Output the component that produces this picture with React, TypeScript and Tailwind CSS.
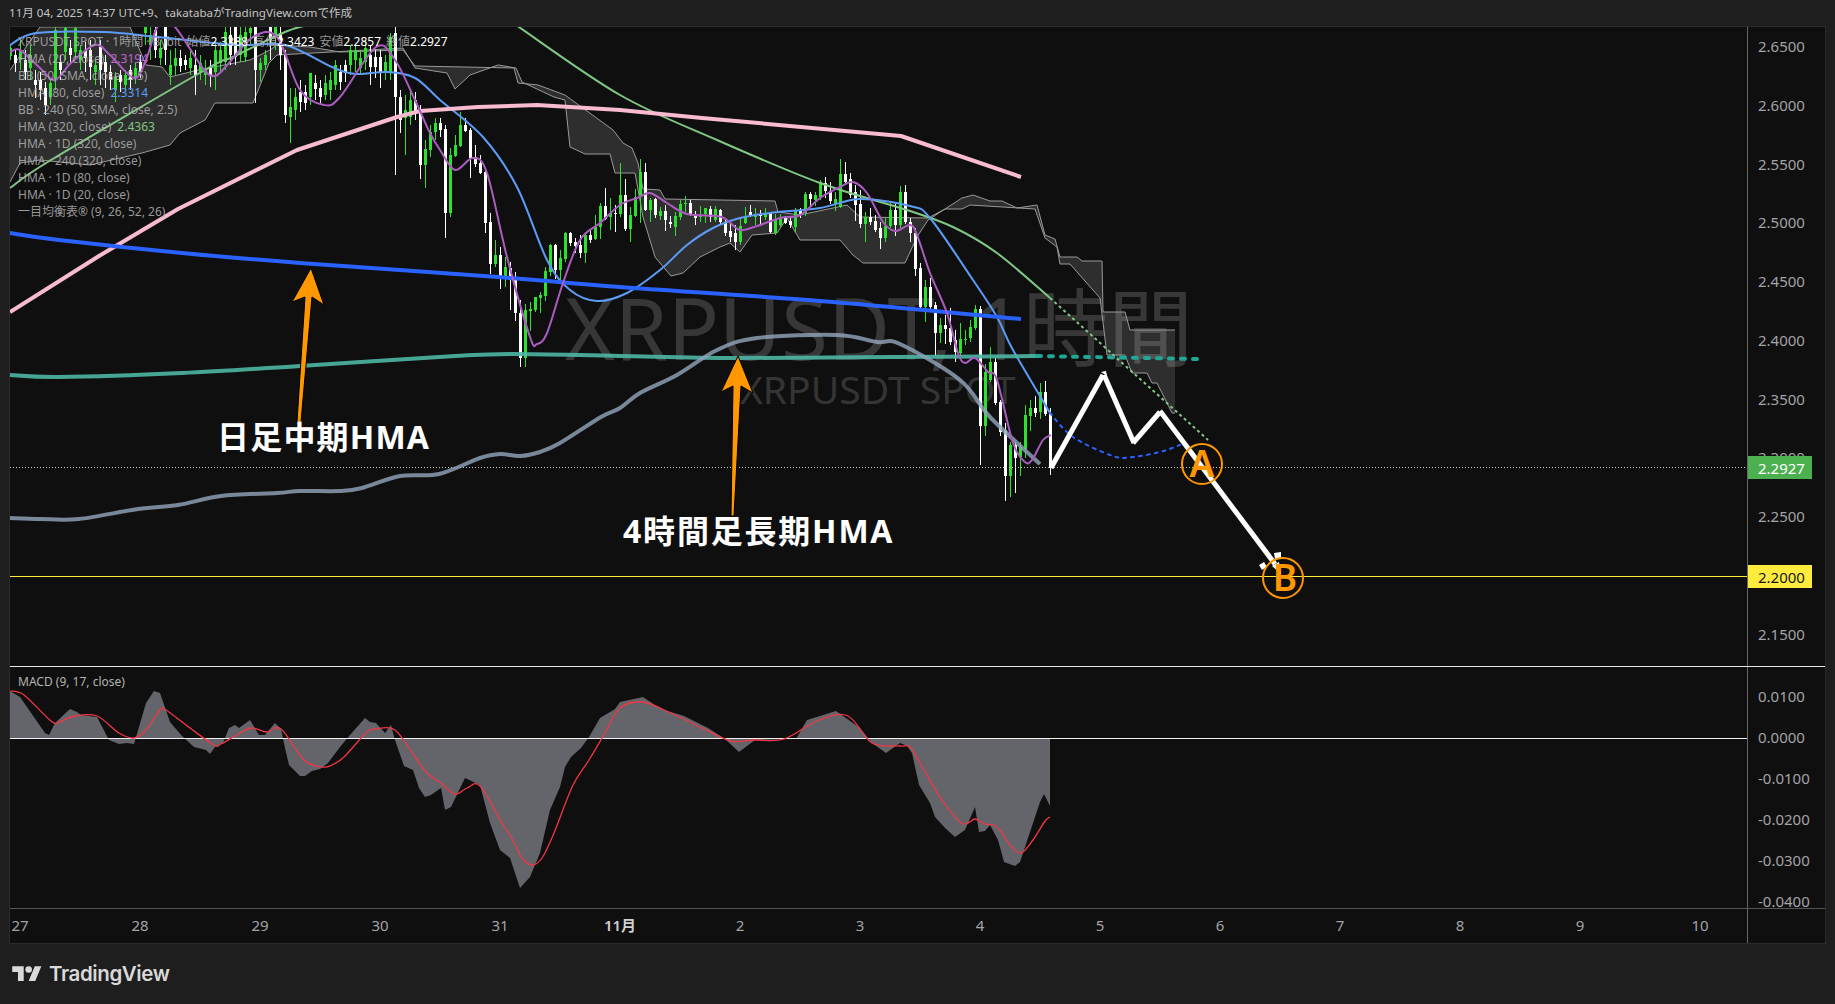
type Pt = number[];

// all chart data is in page pixels: the svg viewBoxes below line up with the page
const candles: number[][] = [
  [1,44,48,56,60],[0,50,55,63,72],[1,40,50,60,70],[0,50,60,72,80],[1,45,55,68,80],[0,70,80,85,98],[0,72,80,90,100],[0,82,88,105,115],
  [1,78,83,97,105],[1,27,30,80,90],[0,55,62,70,80],[1,27,28,52,60],[0,40,48,55,62],[1,27,28,52,60],[1,45,50,60,70],[0,42,50,58,72],
  [0,40,50,67,80],[1,60,65,72,85],[0,40,47,70,85],[0,55,62,72,88],[0,65,72,80,90],[1,72,77,90,102],[0,70,75,82,92],[1,70,75,85,92],
  [0,65,70,80,90],[1,62,68,78,84],[0,55,62,72,78],[1,27,27,33,45],[1,27,35,45,60],[0,27,30,50,58],[1,40,48,58,65],[0,27,27,50,65],
  [1,50,65,75,85],[1,48,58,66,75],[0,50,58,66,72],[0,55,60,65,70],[1,50,58,68,75],[0,50,65,75,95],[1,55,63,72,80],[1,60,68,75,85],
  [0,60,68,75,87],[1,42,50,72,90],[1,42,50,63,72],[1,27,32,62,70],[0,27,35,55,65],[0,27,27,57,65],[1,27,35,55,62],[1,27,32,57,62],
  [1,27,28,33,45],[0,27,27,70,103],[1,58,63,70,82],[1,50,55,65,70],[0,27,27,40,60],[1,27,27,37,50],[0,27,33,55,70],[0,50,55,115,123],
  [1,88,107,117,143],[1,88,97,110,120],[0,80,92,102,112],[0,85,92,103,110],[1,73,73,97,105],[0,75,83,89,100],[0,80,88,97,103],[1,75,83,95,100],
  [1,72,80,90,100],[1,60,65,85,90],[0,65,72,82,90],[0,60,65,73,82],[1,45,50,65,75],[1,45,50,60,72],[1,50,58,68,75],[1,40,48,62,70],
  [0,45,55,67,85],[0,50,57,67,78],[0,50,57,72,88],[1,55,62,72,80],[1,33,37,72,80],[0,27,33,97,175],[0,90,97,120,133],[1,95,110,118,155],
  [1,90,100,117,125],[0,92,100,113,120],[0,105,113,165,179],[1,140,149,165,188],[1,125,132,150,157],[1,118,123,132,140],[0,118,123,130,137],[0,125,129,213,238],
  [1,148,155,213,217],[1,135,145,156,157],[1,112,125,146,147],[0,118,125,131,132],[0,128,130,158,178],[0,145,157,164,167],[0,155,163,173,174],[0,168,172,223,233],
  [0,213,222,264,274],[1,240,255,264,267],[0,247,255,277,289],[1,257,267,277,287],[0,262,268,280,310],[0,272,278,313,321],[0,300,313,358,367],[1,304,310,358,367],
  [1,302,309,311,331],[1,297,297,310,312],[1,292,295,298,313],[1,267,271,296,301],[1,244,245,272,276],[0,244,245,270,279],[1,250,258,270,280],[1,232,233,259,262],
  [0,232,233,243,246],[0,238,242,246,253],[0,235,245,253,258],[1,232,235,253,263],[0,230,235,240,243],[1,215,227,239,240],[1,203,206,227,239],[0,188,206,219,220],
  [1,198,213,217,230],[0,205,213,214,232],[1,163,195,214,217],[0,179,195,229,231],[1,207,215,229,242],[1,189,197,216,217],[1,159,172,197,223],[0,163,172,210,211],
  [1,198,200,210,222],[0,198,199,215,218],[1,207,211,216,220],[0,205,211,220,231],[0,216,222,224,228],[1,212,216,227,236],[1,200,204,217,220],[1,196,203,204,212],
  [0,200,203,214,216],[0,211,215,218,225],[1,206,215,217,222],[1,208,208,214,223],[0,206,209,217,222],[1,206,209,220,222],[0,209,210,222,224],[0,220,222,233,236],
  [0,222,231,237,242],[0,225,233,242,250],[1,218,226,242,245],[1,207,216,223,224],[0,205,212,216,217],[1,208,214,217,225],[0,210,215,216,225],[1,208,213,217,220],
  [0,212,213,232,233],[1,214,219,233,235],[1,214,217,225,227],[0,216,217,223,224],[0,217,221,225,228],[1,208,210,227,232],[0,208,210,215,218],[1,192,194,213,216],
  [0,192,194,199,206],[1,192,195,200,206],[1,180,182,197,200],[0,177,183,191,198],[0,182,191,201,204],[1,192,199,204,211],[1,159,174,207,208],[0,162,174,182,184],
  [0,173,179,195,198],[0,185,192,205,221],[0,190,204,224,228],[1,212,217,224,242],[0,208,217,222,225],[0,215,221,230,232],[0,222,228,238,249],[1,218,226,238,242],
  [1,203,210,226,228],[0,204,210,225,236],[1,186,192,225,228],[0,185,192,222,224],[0,218,222,233,242],[0,228,233,269,276],[0,263,268,307,311],[1,280,287,307,322],
  [0,278,287,307,310],[0,302,305,333,356],[1,318,325,333,343],[0,315,325,329,344],[0,308,328,342,345],[0,330,340,352,362],[1,323,339,353,356],[1,330,339,340,345],
  [1,320,327,338,342],[1,305,309,328,330],[0,306,309,426,465],[1,364,372,426,436],[1,347,362,380,382],[0,358,362,403,405],[0,400,402,432,436],[0,423,430,476,501],
  [1,442,445,476,497],[0,442,445,458,493],[1,442,447,457,476],[1,405,415,449,458],[1,400,408,416,431],[0,396,408,413,417],[1,383,392,412,419],[0,381,392,414,416],
  [0,408,413,468,475],
];

const pink: Pt[] = [[10,312],[99,256],[178,209],[297,150],[397,117],[420,111],[478,107],[537,105],[620,110],[702,118],[901,136],[1021,177]];
const royal: Pt[] = [[10,233],[59,240],[182,253],[300,263],[498,277],[620,287],[820,301],[1021,319]];
const teal: Pt[] = [[10,375],[59,377],[182,373],[300,366],[455,356],[514,354],[620,356],[737,358],[893,357],[1037,356]];
const slate: Pt[] = [[10,518],[40,519],[79,519],[138,509],[178,505],[221,496],[277,493],[300,491],[340,491],[362,488],[400,476],[439,474],[480,458],[500,454],[520,456],[540,452],[560,443],[601,417],[620,408],[640,393],[677,375],[717,350],[757,338],[837,335],[877,342],[900,344],[960,380],[990,417],[1040,464]];
const hma80: Pt[] = [[10,45],[36,33],[103,32],[158,37],[237,45],[285,45],[332,67],[356,74],[387,72],[415,78],[440,100],[483,137],[517,187],[547,260],[570,290],[597,301],[627,293],[660,270],[687,245],[713,228],[740,218],[770,213],[820,208],[860,199],[910,206],[930,218],[973,280],[997,317],[1013,350],[1050,413]];
const hma20: Pt[] = [[10,52],[20,50],[40,68],[55,80],[71,63],[95,45],[110,55],[134,78],[146,60],[158,26],[174,26],[202,67],[215,76],[229,63],[253,37],[277,37],[300,90],[324,105],[340,97],[376,47],[395,60],[415,100],[430,133],[440,150],[455,170],[473,158],[487,173],[507,257],[530,337],[537,344],[547,333],[563,283],[580,240],[600,223],[620,205],[637,198],[650,193],[667,203],[687,214],[717,216],[727,220],[740,230],[757,226],[780,218],[800,215],[820,198],[840,187],[853,182],[867,193],[883,222],[895,231],[910,225],[917,235],[930,273],[947,313],[958,353],[965,363],[975,358],[988,372],[997,380],[1013,443],[1025,462],[1032,460],[1043,440],[1051,435]];
const hma320a: Pt[] = [[10,188],[51,160],[205,70],[233,57],[285,32],[308,25]];
const hma320b: Pt[] = [[516,25],[620,95],[717,140],[820,183],[907,210],[953,227],[997,253],[1050,298]];

const cloudTop: Pt[] = [[10,70],[40,27],[130,27],[146,65],[162,67],[170,77],[198,70],[250,60],[270,50],[277,45],[310,47],[340,52],[403,50],[415,66],[514,68],[518,83],[538,85],[565,95],[613,130],[623,143],[632,148],[638,163],[643,189],[660,190],[665,199],[775,201],[778,212],[800,215],[847,205],[860,217],[928,218],[945,209],[962,198],[973,195],[990,201],[1002,201],[1017,208],[1037,205],[1045,235],[1055,239],[1060,257],[1077,257],[1082,261],[1102,261],[1103,312],[1125,312],[1130,330],[1175,330]];
const cloudBottom: Pt[] = [[10,182],[20,163],[40,160],[90,165],[142,153],[170,145],[180,133],[205,120],[215,103],[253,103],[269,63],[277,55],[403,48],[415,68],[447,73],[455,89],[470,75],[498,65],[516,68],[522,82],[554,97],[565,100],[570,147],[585,154],[610,154],[615,173],[635,173],[643,217],[655,257],[671,276],[683,273],[700,257],[720,247],[730,243],[740,252],[752,235],[777,233],[787,218],[800,240],[840,240],[853,255],[863,263],[905,263],[917,237],[928,220],[945,209],[962,209],[970,205],[1035,209],[1045,238],[1057,247],[1060,264],[1070,264],[1100,298],[1107,355],[1125,355],[1132,373],[1147,373],[1152,383],[1157,383],[1172,413],[1175,413]];

const macdArea: Pt[] = [[10,691],[20,697],[45,733],[49,735],[55,723],[70,709],[77,712],[81,715],[97,717],[109,740],[119,744],[127,743],[134,744],[146,703],[154,691],[160,693],[170,722],[182,736],[194,747],[206,750],[210,754],[215,747],[223,743],[229,728],[235,725],[239,728],[250,720],[259,735],[265,735],[275,723],[281,729],[285,748],[289,765],[300,776],[305,776],[312,771],[320,769],[328,763],[340,747],[350,735],[365,718],[370,722],[376,723],[385,733],[391,725],[395,740],[404,766],[413,770],[419,788],[425,797],[431,795],[441,788],[445,810],[451,807],[465,778],[480,785],[490,823],[500,850],[510,858],[520,888],[530,877],[540,853],[550,810],[560,787],[565,767],[571,757],[581,748],[589,737],[600,718],[605,715],[615,709],[620,702],[643,697],[661,709],[684,716],[708,728],[725,739],[739,752],[755,740],[796,739],[807,720],[836,711],[860,728],[872,743],[886,753],[900,743],[907,746],[912,753],[919,785],[930,803],[935,817],[945,828],[955,837],[965,830],[975,807],[979,832],[985,831],[990,825],[998,840],[1004,862],[1015,866],[1020,862],[1030,832],[1040,802],[1044,794],[1050,806],[1050,738],[10,738]];
const macdSignal: Pt[] = [[10,691],[24,695],[51,721],[59,722],[75,716],[97,716],[119,733],[134,738],[146,730],[160,710],[166,710],[190,728],[214,745],[221,744],[235,736],[251,728],[267,732],[281,729],[304,760],[322,767],[332,765],[344,757],[366,733],[376,729],[395,730],[415,757],[427,773],[441,783],[455,794],[467,788],[480,786],[502,823],[514,842],[522,858],[532,865],[542,858],[554,833],[573,785],[589,760],[605,733],[620,708],[643,702],[673,714],[702,728],[731,741],[755,740],[784,739],[819,720],[848,716],[872,743],[900,746],[910,747],[920,763],[940,797],[960,822],[968,823],[975,819],[985,824],[993,825],[1000,830],[1010,845],[1021,853],[1033,840],[1045,821],[1050,817]];

const priceLabels = ['2.6500','2.6000','2.5500','2.5000','2.4500','2.4000','2.3500','2.3000','2.2500','2.2000','2.1500'];
const macdLabels = ['0.0100','0.0000','-0.0100','-0.0200','-0.0300','-0.0400'];
const timeLabels = ['27','28','29','30','31','11月','2','3','4','5','6','7','8','9','10'];

const studies = [
  { name: 'HMA (20, close)', value: '2.3194', tone: 'text-[#ba68c8]' },
  { name: 'BB (50, SMA, close, 2.5)' },
  { name: 'HMA (80, close)', value: '2.3314', tone: 'text-[#5b9cf6]' },
  { name: 'BB · 240 (50, SMA, close, 2.5)' },
  { name: 'HMA (320, close)', value: '2.4363', tone: 'text-[#81c784]' },
  { name: 'HMA · 1D (320, close)' },
  { name: 'HMA · 240 (320, close)' },
  { name: 'HMA · 1D (80, close)' },
  { name: 'HMA · 1D (20, close)' },
  { name: '一目均衡表® (9, 26, 52, 26)' },
];

const pts = (p: Pt[]) => p.map((q) => q.join(',')).join(' ');

function smooth(p: Pt[]) {
  let d = `M${p[0][0]} ${p[0][1]}`;
  for (let i = 0; i < p.length - 1; i++) {
    const a = p[i - 1] || p[i];
    const b = p[i];
    const c = p[i + 1];
    const e = p[i + 2] || c;
    d += `C${b[0] + (c[0] - a[0]) / 6} ${b[1] + (c[1] - a[1]) / 6} ${c[0] - (e[0] - b[0]) / 6} ${c[1] - (e[1] - b[1]) / 6} ${c[0]} ${c[1]}`;
  }
  return d;
}

function Line({ p, color, w, opacity = 1, dash }: { p: Pt[]; color: string; w: number; opacity?: number; dash?: string }) {
  return <path d={smooth(p)} fill="none" stroke={color} strokeWidth={w} strokeOpacity={opacity} strokeDasharray={dash} strokeLinecap={dash ? 'round' : 'butt'} strokeLinejoin="round" />;
}

function MainDrawing() {
  return (
    <svg className="absolute inset-0" width={1737} height={639} viewBox="10 27 1737 639">
      <polygon points={pts([...cloudTop, ...[...cloudBottom].reverse()])} fill="#fff" fillOpacity={0.13} />
      <polyline points={pts(cloudTop)} fill="none" stroke="#9a9a9a" strokeWidth={1} />
      <polyline points={pts(cloudBottom)} fill="none" stroke="#9a9a9a" strokeWidth={1} />

      {candles.map((c, i) => {
        const x = 10 + i * 5;
        const fill = c[0] ? '#2fe12f' : '#ffffff';
        return (
          <g key={i} fill={fill} shapeRendering="crispEdges">
            <rect x={x} y={c[1]} width={1} height={c[4] - c[1]} />
            <rect x={x - 1} y={c[2]} width={3} height={Math.max(c[3] - c[2], 1)} />
          </g>
        );
      })}

      <path d="M10 467.5H1747" stroke="#c8c8c8" strokeDasharray="1 2" shapeRendering="crispEdges" />
      <path d="M10 576.5H1747" stroke="#ffeb3b" shapeRendering="crispEdges" />

      <Line p={hma320a} color="#81c784" w={2} />
      <Line p={hma320b} color="#81c784" w={2} />
      <path d="M1050 298L1208 440" stroke="#81c784" strokeWidth={2} strokeDasharray="3 3" />
      <Line p={hma80} color="#5b9cf6" w={2} />
      <Line p={[[1050,413],[1073,437],[1113,456],[1133,457],[1160,452],[1180,445]]} color="#2962ff" w={2} dash="3 5" />
      <Line p={teal} color="#4db6a4" w={4} opacity={0.9} />
      <path d="M1037 356L1197 359" stroke="#1fa896" strokeWidth={4} strokeLinecap="round" strokeDasharray="4 8" />
      <polyline points={pts(pink)} fill="none" stroke="#f8bbd0" strokeWidth={4} strokeLinejoin="round" />
      <Line p={royal} color="#2962ff" w={4} />
      <Line p={slate} color="#90a4ba" w={4} opacity={0.82} />
      <Line p={hma20} color="#ab5cc0" w={2} />

      <polygon points="311,268 324,305 312,297 301,422 297,422 305,297 292,302" fill="#ff9800" stroke="#000" />
      <polygon points="738,356 753,393 741,386 734,516 731,516 733,386 721,392" fill="#ff9800" stroke="#000" />

      <g stroke="#fff" strokeWidth={5} fill="none">
        <path d="M1051 468L1103 375" />
        <path d="M1104 375L1134 443" />
        <path d="M1133 443L1160 412" />
        <path d="M1160 411L1275 564" />
      </g>
      <path d="M1101 372L1106 371L1107 376Z" fill="#fff" />
      <path d="M1259 565L1264 562L1267 567L1262 570Z M1274 553L1281 552L1281 558L1275 559Z M1272 566L1279 562L1281 574Z" fill="#fff" />

      <g fill="none" stroke="#ff9800" strokeWidth={2}>
        <circle cx={1202} cy={464} r={20} />
        <circle cx={1283} cy={578} r={20} />
      </g>
      <g fill="#ff9800" fontSize={37} fontWeight={600} textAnchor="middle">
        <text x={1202} y={477}>A</text>
        <text x={1285} y={591}>B</text>
      </g>
    </svg>
  );
}

function Legend() {
  return (
    <div className="absolute left-2 top-[6px] flex flex-col text-[12px] leading-[17px] text-[#b4b4b4]/85">
      <div className="flex gap-[5px] whitespace-pre">
        <span>XRPUSDT SPOT · 1時間 · Bybit</span>
        <span>始値<b className="font-normal text-white">2.3388</b></span>
        <span>高値<b className="font-normal text-white">2.3423</b></span>
        <span>安値<b className="font-normal text-white">2.2857</b></span>
        <span>終値<b className="font-normal text-white">2.2927</b></span>
      </div>
      {studies.map((s) => (
        <div key={s.name} className="flex gap-[6px]">
          <span>{s.name}</span>
          {s.value && <span className={s.tone}>{s.value}</span>}
        </div>
      ))}
    </div>
  );
}

function TvLogo() {
  return (
    <div className="flex items-center gap-[7px] text-[#d9d9d9]">
      <svg width={30} height={23} viewBox="0 0 36 28" fill="currentColor">
        <path d="M14 22H7V11H0V4h14v18zM28 22h-8l7.5-18h8L28 22z" />
        <circle cx={20} cy={8} r={4} />
      </svg>
      <span className="font-['Inter',sans-serif] text-[20.5px] font-semibold leading-none tracking-[-0.4px]">TradingView</span>
    </div>
  );
}

export default function App() {
  return (
    <div className="flex h-[1004px] w-[1835px] flex-col overflow-hidden bg-[#1e1e1e] font-['Noto_Sans','Noto_Sans_CJK_JP',sans-serif]">
      <header className="flex h-[26px] items-center pl-[9px] text-[11.6px] text-[#c4c4c4]">
        11月 04, 2025 14:37 UTC+9、takatabaがTradingView.comで作成
      </header>

      <div className="ml-[9px] flex w-[1817px] flex-col border border-[#2b2b2b] bg-[#0f0f0f]">
        <div className="flex h-[639px]">
          <div className="relative w-[1737px] overflow-hidden">
            <div className="absolute left-[555px] top-[254px] whitespace-nowrap text-[85px] leading-[92px] text-white/[0.17]">XRPUSDT, 1時間</div>
            <div className="absolute left-[730px] top-[337px] whitespace-nowrap text-[39px] leading-[50px] text-white/[0.17]">XRPUSDT SPOT</div>
            <MainDrawing />
            <Legend />
            <div className="absolute left-[207px] top-[389px] whitespace-nowrap text-[32px] font-bold leading-[42px] tracking-[1.2px] text-white">日足中期HMA</div>
            <div className="absolute left-[613px] top-[483px] whitespace-nowrap text-[32px] font-bold leading-[42px] tracking-[1.8px] text-white">4時間足長期HMA</div>
          </div>
          <div className="relative flex w-[78px] flex-col border-l border-[#666] text-[15px] leading-[18px] text-[#a3a3a8]">
            {priceLabels.map((l) => (
              <div key={l} className="h-[58.75px] shrink-0 pl-[10px] pt-[10px]">{l}</div>
            ))}
            <div className="absolute left-0 top-[429px] flex h-[23px] w-[64px] items-center bg-[#4caf50] pl-[10px] text-white">2.2927</div>
            <div className="absolute left-0 top-[538px] flex h-[23px] w-[64px] items-center bg-[#ffeb3b] pl-[10px] text-[#131722]">2.2000</div>
          </div>
        </div>

        <div className="h-px bg-[#e8e8e8]" />

        <div className="flex h-[241px]">
          <div className="relative w-[1737px] overflow-hidden">
            <svg className="absolute inset-0" width={1737} height={241} viewBox="10 667 1737 241">
              <polygon points={pts(macdArea)} fill="#63656b" />
              <path d="M10 738.5H1747" stroke="#f0f0f0" strokeWidth={1} shapeRendering="crispEdges" />
              <Line p={macdSignal} color="#f23645" w={1.3} />
            </svg>
            <div className="absolute left-2 top-[6px] text-[12px] leading-[17px] text-[#b4b4b4]">MACD (9, 17, close)</div>
          </div>
          <div className="flex w-[78px] flex-col border-l border-[#666] pt-[19.5px] text-[15px] leading-[18px] text-[#a3a3a8]">
            {macdLabels.map((l) => (
              <div key={l} className="h-[41.2px] shrink-0 pl-[10px]">{l}</div>
            ))}
          </div>
        </div>

        <div className="flex h-[35px] border-t border-[#555]">
          <div className="flex w-[1737px] overflow-hidden">
            <div className="-ml-[50px] flex items-center pb-[1px] text-[15px] text-[#a3a3a8]">
              {timeLabels.map((l) => (
                <div key={l} className={l === '11月' ? 'w-[120px] text-center font-semibold text-[#d0d0d0]' : 'w-[120px] text-center'}>{l}</div>
              ))}
            </div>
          </div>
          <div className="w-[78px] border-l border-[#666]" />
        </div>
      </div>

      <footer className="flex flex-1 items-center pl-[12px]">
        <TvLogo />
      </footer>
    </div>
  );
}
